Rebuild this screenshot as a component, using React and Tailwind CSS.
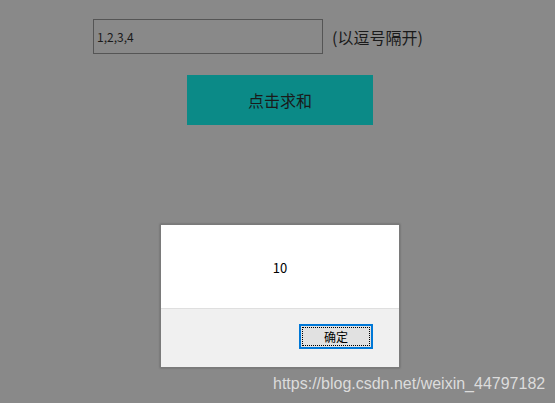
import React from 'react'

const font = { fontFamily: '"Microsoft YaHei", "Noto Sans CJK SC", sans-serif' }

const App = () => {
    return (
    <div className="relative w-[555px] h-[403px] overflow-hidden bg-[#898989]" style={font}>
        {/* page content (dimmed behind the alert) */}
        <div className="flex flex-col pt-[19px]">
            <div className="flex flex-row items-center pl-[93px]">
                <div className="w-[230px] h-[35px] border border-[#555555] flex items-center px-[3px] text-[12px] text-[#1a1a1a]">1,2,3,4</div>
                <span className="ml-[9px] text-[16px] text-[#1a1a1a]">(以逗号隔开)</span>
            </div>
            <div className="pl-[187px] mt-[21px]">
                <button className="w-[186px] h-[50px] bg-[#0b8a87] text-[16px] text-[#1a1a1a]">点击求和</button>
            </div>
        </div>

        {/* alert dialog */}
        <div className="absolute left-[160px] top-[224px] w-[240px] h-[144px] border border-[#7a7a7a] flex flex-col shadow-[0_0_2px_rgba(0,0,0,0.3)]">
            <div className="h-[84px] bg-white border-b border-[#dfdfdf] flex items-center justify-center text-[13px] text-black pt-[2px]">10</div>
            <div className="flex-1 bg-[#f0f0f0] flex justify-end items-start pt-[15px] pr-[26px]">
                <button className="w-[74px] h-[25px] bg-[#e1e1e1] border-2 border-[#0078d7] outline-1 outline-dotted outline-black -outline-offset-4 text-[12px] text-black">确定</button>
            </div>
        </div>

        {/* watermark */}
        <div className="absolute left-[273px] top-[372px] text-[16px] text-[#dcdcdc]" style={{ fontFamily: '"Liberation Sans", Arial, sans-serif' }}>https://blog.csdn.net/weixin_44797182</div>
    </div>
    );
}

export default App;
